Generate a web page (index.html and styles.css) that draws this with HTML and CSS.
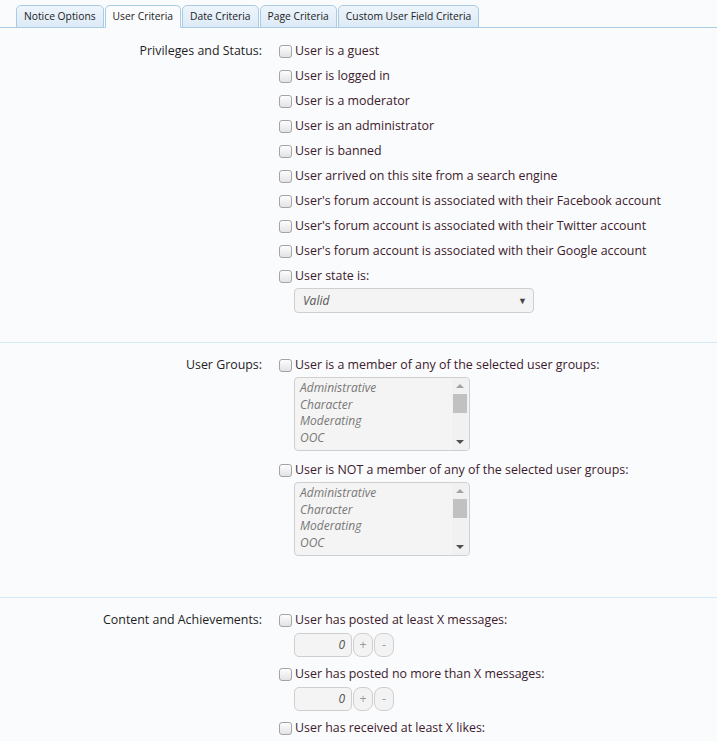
FILE: index.html
```html
<!DOCTYPE html>
<html lang="en">
<head>
  <meta charset="UTF-8" />
  <title>User Criteria</title>
  <link rel="stylesheet" href="styles.css">
</head>
<body>
  <ul class="tabs">
    <li class="tab">Notice Options</li>
    <li class="tab active">User Criteria</li>
    <li class="tab">Date Criteria</li>
    <li class="tab">Page Criteria</li>
    <li class="tab">Custom User Field Criteria</li>
  </ul>

  <!-- privileges -->
  <dl class="ctrl-unit first">
    <dt>Privileges and Status:</dt>
    <dd>
      <ul class="options">
        <li><label><span class="check"></span>User is a guest</label></li>
        <li><label><span class="check"></span>User is logged in</label></li>
        <li><label><span class="check"></span>User is a moderator</label></li>
        <li><label><span class="check"></span>User is an administrator</label></li>
        <li><label><span class="check"></span>User is banned</label></li>
        <li><label><span class="check"></span>User arrived on this site from a search engine</label></li>
        <li><label><span class="check"></span>User's forum account is associated with their Facebook account</label></li>
        <li><label><span class="check"></span>User's forum account is associated with their Twitter account</label></li>
        <li><label><span class="check"></span>User's forum account is associated with their Google account</label></li>
        <li>
          <label><span class="check"></span>User state is:</label>
          <div class="dep">
            <div class="select">Valid<span class="caret">▼</span></div>
          </div>
        </li>
      </ul>
    </dd>
  </dl>

  <!-- groups -->
  <dl class="ctrl-unit groups">
    <dt>User Groups:</dt>
    <dd>
      <ul class="options">
        <li class="spaced">
          <label><span class="check"></span>User is a member of any of the selected user groups:</label>
          <div class="dep">
            <div class="listbox">
              <div class="items">
                <div>Administrative</div>
                <div>Character</div>
                <div>Moderating</div>
                <div>OOC</div>
              </div>
              <div class="scroll"><span class="up"></span><span class="thumb"></span><span class="down"></span></div>
            </div>
          </div>
        </li>
        <li>
          <label><span class="check"></span>User is NOT a member of any of the selected user groups:</label>
          <div class="dep">
            <div class="listbox">
              <div class="items">
                <div>Administrative</div>
                <div>Character</div>
                <div>Moderating</div>
                <div>OOC</div>
              </div>
              <div class="scroll"><span class="up"></span><span class="thumb"></span><span class="down"></span></div>
            </div>
          </div>
        </li>
      </ul>
    </dd>
  </dl>

  <!-- content -->
  <dl class="ctrl-unit last">
    <dt>Content and Achievements:</dt>
    <dd>
      <ul class="options">
        <li class="num-row">
          <label><span class="check"></span>User has posted at least X messages:</label>
          <div class="dep spinner">
            <div class="num">0</div><span class="btn">+</span><span class="btn">-</span>
          </div>
        </li>
        <li class="num-row">
          <label><span class="check"></span>User has posted no more than X messages:</label>
          <div class="dep spinner">
            <div class="num">0</div><span class="btn">+</span><span class="btn">-</span>
          </div>
        </li>
        <li class="num-row">
          <label><span class="check"></span>User has received at least X likes:</label>
          <div class="dep spinner">
            <div class="num">0</div><span class="btn">+</span><span class="btn">-</span>
          </div>
        </li>
      </ul>
    </dd>
  </dl>
</body>
</html>
```

FILE: styles.css
```css
:root {
  --bg: #fafbfd;
  --tab-border: #a9cbe4;
  --rule: #d4eaf9;
  --text: #1e1e1e;
  --opt: #3d1a2c;
  --field: #f4f4f4;
  --field-border: #cfcfcf;
}

* {
  box-sizing: border-box;
  margin: 0;
  padding: 0;
}

body {
  font-family: "Open Sans", "Liberation Sans", sans-serif;
  font-size: 12.4px;
  background: var(--bg);
  color: var(--text);
  overflow: hidden;
}

/* tabs */
.tabs {
  list-style: none;
  display: flex;
  gap: 1px;
  padding: 5px 0 0 16px;
  height: 28px;
  border-bottom: 1px solid var(--tab-border);
}

.tab {
  height: 23px;
  padding: 0 7px;
  font-size: 10.3px;
  line-height: 21px;
  color: #222;
  border: 1px solid var(--tab-border);
  border-radius: 5px 5px 0 0;
  background: linear-gradient(#eef5fb, #dceaf6);
}

.tab.active {
  background: var(--bg);
  border-bottom-color: var(--bg);
}

/* rows */
.ctrl-unit {
  display: flex;
  padding: 12px 0 26px;
  border-bottom: 1px solid var(--rule);
}

.ctrl-unit.first {
  padding: 13px 0 24px;
}

.ctrl-unit.groups {
  padding-bottom: 36px;
}

.ctrl-unit.last {
  border-bottom: none;
}

.ctrl-unit dt {
  width: 262px;
  flex-shrink: 0;
  text-align: right;
  line-height: 20px;
  color: var(--text);
}

.ctrl-unit dd {
  padding-left: 17px;
}

.options {
  list-style: none;
}

.options li {
  margin-bottom: 5px;
}

.options li.spaced {
  margin-bottom: 9px;
}

.options li.num-row {
  margin-bottom: 7px;
}

.options label {
  display: flex;
  align-items: center;
  line-height: 20px;
  color: var(--opt);
  white-space: nowrap;
}

.check {
  width: 13px;
  height: 13px;
  margin-right: 3px;
  border: 1px solid #a4a4a4;
  border-radius: 3px;
  background: linear-gradient(#fdfdfd, #e3e3e3);
  flex-shrink: 0;
}

.dep {
  margin: 2px 0 0 15px;
}

/* select */
.select {
  position: relative;
  width: 240px;
  height: 25px;
  padding-left: 8px;
  line-height: 23px;
  font-size: 12px;
  font-style: italic;
  color: #555;
  background: var(--field);
  border: 1px solid var(--field-border);
  border-radius: 4px;
}

.caret {
  position: absolute;
  right: 6px;
  top: 0;
  font-size: 9px;
  font-style: normal;
  color: #444;
}

/* list box */
.listbox {
  display: flex;
  width: 176px;
  height: 74px;
  background: var(--field);
  border: 1px solid var(--field-border);
  border-radius: 4px;
  overflow: hidden;
}

.items {
  flex: 1;
  padding: 2px 5px;
  font-size: 12px;
  font-style: italic;
  color: #777;
  line-height: 16.5px;
}

.scroll {
  width: 16px;
  margin-right: 1px;
  display: flex;
  flex-direction: column;
  align-items: center;
  background: #f1f1f1;
}

.scroll .up,
.scroll .down {
  width: 0;
  height: 0;
  border-left: 4px solid transparent;
  border-right: 4px solid transparent;
}

.scroll .up {
  margin-top: 6px;
  border-bottom: 4px solid #a3a3a3;
}

.scroll .thumb {
  width: 14px;
  height: 19px;
  margin-top: 6px;
  background: #c1c1c1;
}

.scroll .down {
  margin-top: auto;
  margin-bottom: 6px;
  border-top: 4px solid #505050;
}

/* spinner */
.spinner {
  display: flex;
  align-items: center;
  gap: 1px;
  margin-top: 3px;
}

.num {
  width: 58px;
  height: 24px;
  padding-right: 6px;
  text-align: right;
  line-height: 22px;
  font-size: 12px;
  font-style: italic;
  color: #555;
  background: var(--field);
  border: 1px solid var(--field-border);
  border-radius: 5px;
}

.btn {
  width: 20px;
  height: 24px;
  text-align: center;
  line-height: 21px;
  color: #999;
  background: #f3f3f3;
  border: 1px solid var(--field-border);
  border-radius: 8px;
}
```
